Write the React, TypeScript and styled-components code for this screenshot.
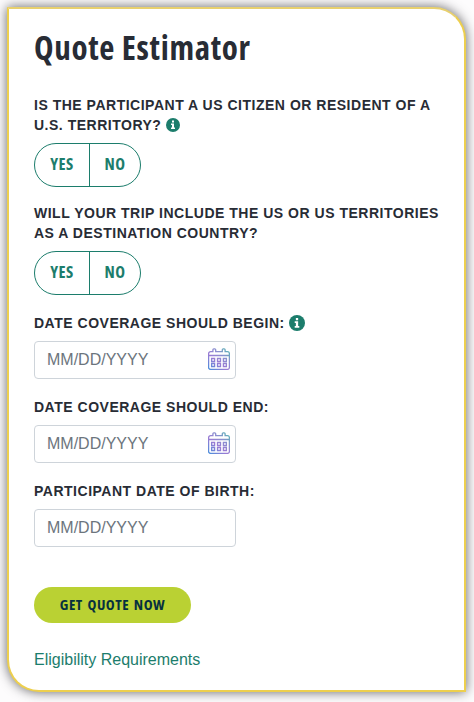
import React from "react";
import styled, { createGlobalStyle } from "styled-components";

const GlobalStyle = createGlobalStyle`
  *, *::before, *::after { box-sizing: border-box; }
  html, body { margin: 0; background: #fdfcfd; }
  body { overflow: hidden; font-family: "Liberation Sans", Arial, sans-serif; color: #282c35; }
  #root { height: 702px; padding: 7px 8px 10px 7px; }
`;

const Card = styled.form`
  height: 685px;
  width: 459px;
  margin: 0;
  padding: 17px 0 0 25px;
  background: #fff;
  border: 2px solid #edcf4e;
  border-top-color: #e8d06e;
  border-radius: 0 32px 0 32px;
  box-shadow: 0 0 12px rgba(35, 35, 40, 0.7);
`;

const Title = styled.h1`
  margin: 0;
  height: 44px;
  font: 700 33px/44px "Open Sans", "Noto Sans", sans-serif;
  font-stretch: 75%;
  letter-spacing: 0.68px;
  white-space: nowrap;
`;

const Field = styled.div<{ $gap: number }>`
  margin-top: ${(p) => p.$gap}px;
`;

const Label = styled.div`
  margin-bottom: 8px;
  font-size: 14px;
  font-weight: 700;
  line-height: 20px;
  letter-spacing: 0.51px;
  white-space: nowrap;
`;

const Line = styled.div`
  display: flex;
  align-items: center;
  height: 20px;
`;

const InfoSvg = styled.svg<{ $size: number }>`
  width: ${(p) => p.$size}px;
  height: ${(p) => p.$size}px;
  margin: -1px 0 0 4.5px;
`;

const Choice = styled.div`
  display: flex;
  width: 107px;
  height: 44px;
  border: 1px solid #1c7d6c;
  border-radius: 22px;
`;

const Option = styled.button<{ $first?: boolean }>`
  flex: none;
  width: ${(p) => (p.$first ? 55 : 50)}px;
  padding: 0 0 2px;
  border: 0;
  border-right: ${(p) => (p.$first ? "1px solid #1c7d6c" : "0")};
  background: none;
  color: #1c7d6c;
  font: 700 16.5px/40px "Open Sans", "Noto Sans", sans-serif;
  font-stretch: 75%;
  letter-spacing: 0.4px;
`;

const InputBox = styled.div`
  display: flex;
  align-items: center;
  width: 202px;
  height: 38px;
  padding: 0 5px 0 12px;
  border: 1px solid #ced4da;
  border-radius: 4px;
`;

const Input = styled.input`
  flex: 1;
  min-width: 0;
  padding: 0;
  border: 0;
  outline: 0;
  background: none;
  font: 16px/24px "Liberation Sans", Arial, sans-serif;
  &::placeholder { color: #6c757d; opacity: 1; }
`;

const CalendarSvg = styled.svg`
  width: 22px;
  height: 22px;
  margin-bottom: 3px;
  flex: none;
`;

const Submit = styled.button`
  display: block;
  width: 157px;
  height: 36px;
  margin-top: 40px;
  padding: 0 0 2px;
  border: 0;
  border-radius: 18px;
  background: #bad133;
  color: #06303f;
  font: 700 15px/34px "Open Sans", "Noto Sans", sans-serif;
  font-stretch: 75%;
  letter-spacing: 0.5px;
  word-spacing: 1.6px;
`;

const Link = styled.a`
  display: inline-block;
  margin-top: 25px;
  color: #1c7d6c;
  font-size: 16px;
  line-height: 24px;
  text-decoration: none;
`;

const Info = ({ size = 14 }: { size?: number }) => (
  <InfoSvg $size={size} viewBox="0 0 14 14">
    <circle cx="7" cy="7" r="7" fill="#1c7d6c" />
    <path d="M6 2.600h2v1.900H6zM5 5.500h3v4.100h1v1.500H5V9.600h1V7H5z" fill="#fff" />
  </InfoSvg>
);

const Calendar = ({ id }: { id: string }) => (
  <CalendarSvg viewBox="0 0 22 22" fill="none" stroke={`url(#${id})`} strokeWidth="1.300">
    <defs>
      <linearGradient id={id} gradientUnits="userSpaceOnUse" x1="2" y1="22" x2="20" y2="1">
        <stop offset="0" stopColor="#4e8edb" />
        <stop offset="0.4" stopColor="#9b7bd4" />
        <stop offset="0.7" stopColor="#8a90cf" />
        <stop offset="1" stopColor="#58b4b4" />
      </linearGradient>
    </defs>
    <path d="M2.600 3.600H4.900V1.800a1 1 0 0 1 1-1h.8a1 1 0 0 1 1 1v1.800h6.600V1.800a1 1 0 0 1 1-1h.8a1 1 0 0 1 1 1v1.800h2.300a2 2 0 0 1 2 2v13.800a2 2 0 0 1-2 2H2.600a2 2 0 0 1-2-2V5.600a2 2 0 0 1 2-2zM.600 7.500h20.800" />
    <path d="M3.600 10.500h3v3h-3zM9.500 10.500h3v3h-3zM15.400 10.500h3v3h-3zM3.600 15.500h3v3h-3zM9.500 15.500h3v3h-3zM15.400 15.500h3v3h-3z" />
  </CalendarSvg>
);

const YesNo = () => (
  <Choice>
    <Option type="button" $first>YES</Option>
    <Option type="button">NO</Option>
  </Choice>
);

export default function App() {
  return (
    <>
      <GlobalStyle />
      <Card>
        <Title>Quote Estimator</Title>
        <Field $gap={25}>
          <Label>
            <Line>IS THE PARTICIPANT A US CITIZEN OR RESIDENT OF A</Line>
            <Line>U.S. TERRITORY?<Info /></Line>
          </Label>
          <YesNo />
        </Field>
        <Field $gap={16}>
          <Label>
            <Line>WILL YOUR TRIP INCLUDE THE US OR US TERRITORIES</Line>
            <Line>AS A DESTINATION COUNTRY?</Line>
          </Label>
          <YesNo />
        </Field>
        <Field $gap={18}>
          <Label><Line>DATE COVERAGE SHOULD BEGIN:<Info size={16} /></Line></Label>
          <InputBox><Input placeholder="MM/DD/YYYY" /><Calendar id="begin" /></InputBox>
        </Field>
        <Field $gap={18}>
          <Label><Line>DATE COVERAGE SHOULD END:</Line></Label>
          <InputBox><Input placeholder="MM/DD/YYYY" /><Calendar id="end" /></InputBox>
        </Field>
        <Field $gap={18}>
          <Label><Line>PARTICIPANT DATE OF BIRTH:</Line></Label>
          <InputBox><Input placeholder="MM/DD/YYYY" /></InputBox>
        </Field>
        <Submit type="button">GET QUOTE NOW</Submit>
        <Link href="#">Eligibility Requirements</Link>
      </Card>
    </>
  );
}
